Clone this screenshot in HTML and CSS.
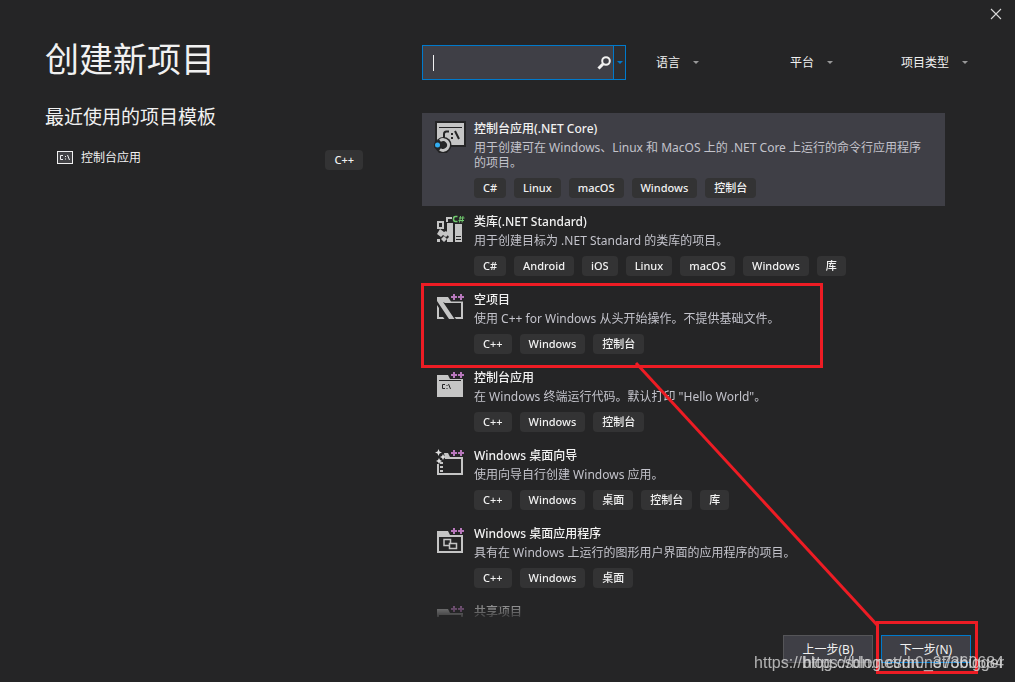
FILE: index.html
```
<!DOCTYPE html>
<html lang="zh-CN">
<head>
  <meta charset="UTF-8">
  <title>创建新项目</title>
  <link rel="stylesheet" href="styles.css">
</head>
<body>
<button type="button" class="close" aria-label="关闭">
  <svg width="12" height="12" viewBox="0 0 12 12"><path d="M1 1L11 11M11 1L1 11" stroke="#d8d8d8" stroke-width="1.1"/></svg>
</button>

<div class="dialog">
  <!-- 左侧 最近使用 -->
  <aside class="recent">
    <h1>创建新项目</h1>
    <h2>最近使用的项目模板</h2>
    <div class="recent-item">
      <svg class="recent-icon" width="16" height="15" viewBox="0 0 16 15">
        <rect x="0.5" y="1.5" width="15" height="12" fill="#424245" stroke="#f1f1f1"/>
        <path d="M6 5.5H3.5V9.5H6M8.5 6v1M8.5 8.5v1M10.5 5L12.5 10" fill="none" stroke="#f1f1f1"/>
      </svg>
      <span class="recent-name">控制台应用</span>
      <span class="tag">C++</span>
    </div>
  </aside>

  <!-- 右侧 搜索和模板列表 -->
  <main class="templates">
    <div class="toolbar">
      <div class="search">
        <input type="text" class="search-input" aria-label="搜索模板">
        <span class="caret"></span>
        <button type="button" class="search-btn" aria-label="搜索">
          <svg width="14" height="14" viewBox="0 0 14 14" fill="none" stroke="#f1f1f1"><circle cx="9" cy="5" r="3.8" stroke-width="2"/><path d="M6 8L1.5 12.5" stroke-width="3"/></svg>
        </button>
        <button type="button" class="search-drop" aria-label="搜索历史">
          <svg width="6" height="3" viewBox="0 0 6 3"><path d="M0 0H6L3 3z" fill="#007acc"/></svg>
        </button>
      </div>
      <div class="filters">
        <label class="filter">
          <select aria-label="语言"><option>语言</option></select>
          <svg width="6" height="3" viewBox="0 0 6 3"><path d="M0 0H6L3 3z" fill="#999"/></svg>
        </label>
        <label class="filter">
          <select aria-label="平台"><option>平台</option></select>
          <svg width="6" height="3" viewBox="0 0 6 3"><path d="M0 0H6L3 3z" fill="#999"/></svg>
        </label>
        <label class="filter">
          <select aria-label="项目类型"><option>项目类型</option></select>
          <svg width="6" height="3" viewBox="0 0 6 3"><path d="M0 0H6L3 3z" fill="#999"/></svg>
        </label>
      </div>
    </div>

    <div class="list">
      <div class="item selected">
        <svg class="icon" viewBox="0 0 32 32">
          <path d="M1 0H32V26H16L13 32H5L0 26L1 20z" fill="#252526"/>
          <rect x="3" y="2" width="27" height="22" fill="#c5c5c5"/>
          <path d="M5 6.5H28" stroke="#252526"/>
          <path d="M15 10.5H12.5Q10 10.5 10 13V18M21 10L25 18" fill="none" stroke="#252526" stroke-width="2"/>
          <path d="M17 12h2v2h-2zM17 16h2v2h-2z" fill="#252526"/>
          <circle cx="9.5" cy="24" r="8" fill="#252526"/>
          <path d="M6 19.6A5.4 5.4 0 1 1 6 28.4" fill="none" stroke="#c5c5c5" stroke-width="3"/>
          <circle cx="3.5" cy="24" r="3.5" fill="#252526"/>
          <circle cx="3.5" cy="24" r="2.5" fill="#32adf1"/>
        </svg>
        <div class="info">
          <h3>控制台应用(.NET Core)</h3>
          <p>用于创建可在 Windows、Linux 和 MacOS 上的 .NET Core 上运行的命令行应用程序的项目。</p>
          <div class="tags"><span class="tag">C#</span><span class="tag">Linux</span><span class="tag">macOS</span><span class="tag">Windows</span><span class="tag">控制台</span></div>
        </div>
      </div>

      <div class="item">
        <svg class="icon" viewBox="0 0 32 32">
          <g fill="#c5c5c5">
            <path fill-rule="evenodd" d="M3 7h7v8H3zM5 9v4h3V9z"/>
            <path d="M12 3h6v2h-4v3h-2z"/>
            <path d="M13 9h6v19h-6v-3l2-2-2-3z"/>
            <path d="M21 10h7v18h-7z"/>
            <path d="M6 15l4 3 2-1 3 3-3 3-3-2-2 2-4-3z"/>
            <path d="M10 22l3 3-3 3-3-3zM3 25h3v3H3z"/>
          </g>
          <path d="M22 22.5h5M22 25.5h5" stroke="#252526"/>
          <path d="M23.500 2.500h-2Q19.500 2.500 19.500 5t2 2.500h2" fill="none" stroke="#70c96e" stroke-width="1.500"/>
          <path d="M26.500 2l-1 6.500M29 2l-1 6.500M25 4H30.500M24.500 6.500H30" fill="none" stroke="#70c96e"/>
        </svg>
        <div class="info">
          <h3>类库(.NET Standard)</h3>
          <p>用于创建目标为 .NET Standard 的类库的项目。</p>
          <div class="tags"><span class="tag">C#</span><span class="tag">Android</span><span class="tag">iOS</span><span class="tag">Linux</span><span class="tag">macOS</span><span class="tag">Windows</span><span class="tag">库</span></div>
        </div>
      </div>

      <div class="item">
        <svg class="icon" viewBox="0 0 32 32">
          <path d="M3 5H14L17 9.500H29V27H22L20.500 25H27V11H11L9 10L20.500 27H15L3 9z" fill="#c5c5c5"/>
          <path d="M3 13L5 16V25H9L10.500 27H3z" fill="#c5c5c5"/>
          <path d="M17 4h6v2h-6zM19 2h2v6h-2zM24 4h6v2h-6zM26 2h2v6h-2z" fill="#b878bc"/>
        </svg>
        <div class="info">
          <h3>空项目</h3>
          <p>使用 C++ for Windows 从头开始操作。不提供基础文件。</p>
          <div class="tags"><span class="tag">C++</span><span class="tag">Windows</span><span class="tag">控制台</span></div>
        </div>
      </div>

      <div class="item">
        <svg class="icon" viewBox="0 0 32 32">
          <path d="M3 5H14L16 9H29V27H3z" fill="#c5c5c5"/>
          <path d="M5 10.5H27" stroke="#252526"/>
          <path d="M11 14.5H8.5V18.5H11M13 15v1M13 18v1M14.5 14L16.5 19" fill="none" stroke="#252526"/>
          <path d="M17 4h6v2h-6zM19 2h2v6h-2zM24 4h6v2h-6zM26 2h2v6h-2z" fill="#b878bc"/>
        </svg>
        <div class="info">
          <h3>控制台应用</h3>
          <p>在 Windows 终端运行代码。默认打印 "Hello World"。</p>
          <div class="tags"><span class="tag">C++</span><span class="tag">Windows</span><span class="tag">控制台</span></div>
        </div>
      </div>

      <div class="item">
        <svg class="icon" viewBox="0 0 32 32">
          <path d="M10 5H14L16 9H29V27H3V16H5V25H27V11H11z" fill="#c5c5c5"/>
          <path d="M6 14h3v2H6zM6 18h3v2H6zM6 22h3v2H6z" fill="#c5c5c5"/>
          <path d="M4.500 1l1 2.500 2.500 1-2.500 1-1 2.500-1-2.500-2.500-1 2.500-1zM9 6l1 2 2 1-2 1-1 2-1-2-2-1 2-1zM5 10l1 2 2 1-2 1-1 2-1-2-2-1 2-1z" fill="#e0e0e0"/>
          <path d="M17 4h6v2h-6zM19 2h2v6h-2zM24 4h6v2h-6zM26 2h2v6h-2z" fill="#b878bc"/>
        </svg>
        <div class="info">
          <h3>Windows 桌面向导</h3>
          <p>使用向导自行创建 Windows 应用。</p>
          <div class="tags"><span class="tag">C++</span><span class="tag">Windows</span><span class="tag">桌面</span><span class="tag">控制台</span><span class="tag">库</span></div>
        </div>
      </div>

      <div class="item">
        <svg class="icon" viewBox="0 0 32 32">
          <path fill-rule="evenodd" d="M3 5H14L16 9H29V27H3zM5 11V25H27V11z" fill="#c5c5c5"/>
          <path d="M10 13.500H16.500V19.500H10z" fill="none" stroke="#c5c5c5" stroke-width="1.500"/>
          <path d="M15.500 17.500H22.500V22.500H15.500z" fill="#252526" stroke="#c5c5c5" stroke-width="1.500"/>
          <path d="M17 4h6v2h-6zM19 2h2v6h-2zM24 4h6v2h-6zM26 2h2v6h-2z" fill="#b878bc"/>
        </svg>
        <div class="info">
          <h3>Windows 桌面应用程序</h3>
          <p>具有在 Windows 上运行的图形用户界面的应用程序的项目。</p>
          <div class="tags"><span class="tag">C++</span><span class="tag">Windows</span><span class="tag">桌面</span></div>
        </div>
      </div>

      <div class="item">
        <svg class="icon" viewBox="0 0 32 32">
          <path fill-rule="evenodd" d="M3 5H14L16 9H29V27H3zM5 11V25H27V11z" fill="#c5c5c5"/>
          <path d="M17 4h6v2h-6zM19 2h2v6h-2zM24 4h6v2h-6zM26 2h2v6h-2z" fill="#b878bc"/>
        </svg>
        <div class="info">
          <h3>共享项目</h3>
        </div>
      </div>
    </div>

    <div class="footer">
      <button type="button" class="btn">上一步(B)</button>
      <button type="button" class="btn btn-next">下一步(N)</button>
    </div>
  </main>
</div>

<!-- 红色标注 -->
<svg class="marks" width="1015" height="682" viewBox="0 0 1015 682" fill="none" stroke="#ed1c24" stroke-width="3">
  <rect x="422.5" y="284.5" width="399" height="82"/>
  <rect x="877.5" y="622.5" width="99" height="50"/>
  <path d="M636 363L878 626"/>
</svg>
<!-- 水印 -->
<div class="watermark">https://blog.csdn.net/m0_37360684</div>
<div class="watermark">https://blog.csdn.net/obigger</div>
</body>
</html>
```
FILE: styles.css
```
* {
  box-sizing: border-box;
}

body {
  margin: 0;
  background-color: #252526;
  color: #f1f1f1;
  font-family: "Noto Sans", "Noto Sans CJK SC", sans-serif;
  font-size: 12px;
  line-height: 15px;
}

h1, h2, h3, p {
  margin: 0;
  font-weight: normal;
}

button, input, select {
  font-family: inherit;
  font-size: 12px;
  color: #f1f1f1;
}

button {
  padding: 0;
  border: none;
  background: none;
  cursor: pointer;
}

.close {
  position: absolute;
  top: 8px;
  right: 13px;
  width: 12px;
  height: 12px;
}

.close svg {
  display: block;
}

.dialog {
  display: grid;
  grid-template-columns: 318px 1fr;
  gap: 59px;
  height: 100vh;
  padding: 0 44px 19px 45px;
}

/* 左侧 */
.recent {
  padding-top: 39px;
}

.recent h1 {
  font-size: 34px;
  line-height: 40px;
}

.recent h2 {
  margin-top: 26px;
  font-size: 19px;
  line-height: 24px;
}

.recent-item {
  display: flex;
  align-items: flex-start;
  margin-top: 21px;
  padding-left: 12px;
}

.recent-name {
  flex: 1;
  margin-left: 8px;
}

/* 右侧 */
.templates {
  display: flex;
  flex-direction: column;
  min-width: 0;
  min-height: 0;
  padding-top: 45px;
}

.toolbar {
  display: flex;
  margin-bottom: 33px;
}

.search {
  position: relative;
  display: flex;
  width: 204px;
  height: 35px;
  border: 1px solid #007acc;
  background-color: #3f3f46;
}

.search-input {
  flex: 1;
  min-width: 0;
  padding: 0 10px;
  border: none;
  outline: none;
  background: none;
}

/* 输入光标 */
.caret {
  position: absolute;
  left: 10px;
  top: 9px;
  width: 1px;
  height: 16px;
  background-color: #f1f1f1;
}

.search-btn {
  width: 18px;
}

.search-btn svg, .search-drop svg {
  display: block;
  margin: 0 auto;
}

.search-drop {
  width: 12px;
  border-left: 1px solid #007acc;
  background-color: #2d2d30;
}

.filters {
  display: grid;
  grid-template-columns: 134px 111px auto;
  align-items: center;
  margin-left: 30px;
}

.filter {
  display: flex;
  align-items: center;
  gap: 12px;
}

.filter select {
  appearance: none;
  padding: 0;
  border: none;
  background: none;
}

/* 模板列表 */
.list {
  flex: 1;
  min-height: 0;
  margin-right: 26px;
  margin-bottom: 18px;
  overflow: hidden;
  mask-image: linear-gradient(#000 calc(100% - 24px), rgba(0, 0, 0, 0.15));
}

.item {
  display: flex;
  align-items: flex-start;
  gap: 8px;
  padding: 8px 14px 8px 12px;
}

.item.selected {
  background-color: #3f3f46;
}

.icon {
  flex: none;
  width: 32px;
  height: 32px;
}

.info {
  flex: 1;
}

.info h3 {
  font-size: 12px;
  font-weight: 500;
}

.info p {
  margin-top: 4px;
  color: #c3c3cb;
}

.tags {
  display: flex;
  gap: 8px;
  margin-top: 8px;
}

.tag {
  padding: 0 9px;
  border-radius: 4px;
  background-color: #333334;
  font-size: 11px;
  font-weight: 500;
  line-height: 20px;
}

/* 底部按钮 */
.footer {
  display: flex;
  justify-content: flex-end;
  gap: 8px;
}

.btn {
  width: 90px;
  height: 28px;
  border: 1px solid #555558;
  background-color: #3f3f46;
}

.btn-next {
  border-color: #007acc;
}

.marks {
  position: absolute;
  left: 0;
  top: 0;
  pointer-events: none;
}

.watermark {
  position: absolute;
  right: 11px;
  bottom: 10px;
  color: rgba(225, 225, 225, 0.75);
  font-family: "Liberation Sans", Arial, sans-serif;
  font-size: 16px;
  line-height: 18px;
  pointer-events: none;
}
```
